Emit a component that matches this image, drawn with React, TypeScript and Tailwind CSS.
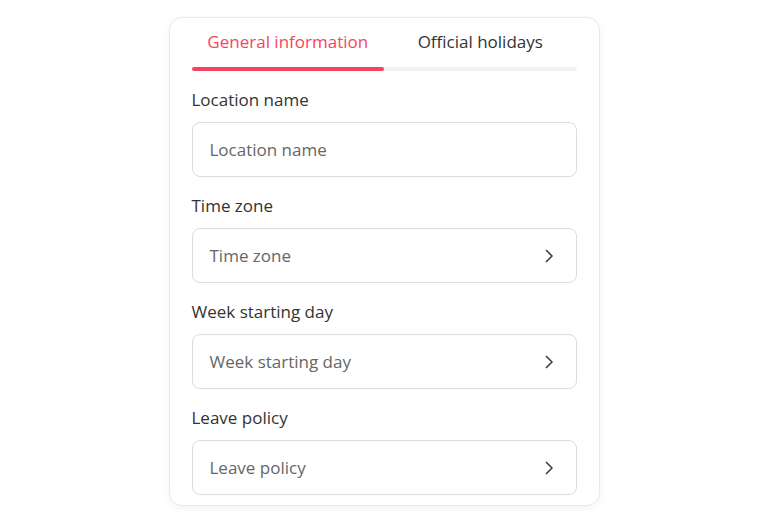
const fields = [
  { label: "Location name", chevron: false },
  { label: "Time zone", chevron: true },
  { label: "Week starting day", chevron: true },
  { label: "Leave policy", chevron: true },
];

const Chevron = () => (
  <svg width="10" height="16" viewBox="0 0 10 16" fill="none">
    <path
      d="M2.5 2.5 L8 8 L2.5 13.5"
      stroke="#444"
      strokeWidth="1.7"
      strokeLinecap="round"
      strokeLinejoin="round"
    />
  </svg>
);

const Field = ({ label, chevron }: { label: string; chevron: boolean }) => {
  return (
    <div className="flex flex-col">
      <div className="h-[28px] flex items-center text-[17px] text-[#333]">{label}</div>
      <div className="mt-[8px] h-[55px] rounded-[8px] border border-[#dcdcdc] flex items-center justify-between pl-[17px] pr-[22px]">
        <span className="text-[17px] text-[#666]">{label}</span>
        {chevron && <Chevron />}
      </div>
    </div>
  );
};

export default function App() {
  return (
    <div
      className="w-[768px] h-[522px] bg-white flex justify-center pt-[17px]"
      style={{ fontFamily: "'Open Sans', sans-serif" }}
    >
      <div className="w-[431px] h-[489px] rounded-[13px] border border-[#e9e9e9] shadow-[0_2px_8px_rgba(0,0,0,0.05)] px-[22px] flex flex-col">
        <div className="flex flex-col">
          <div className="flex h-[49px] items-end pb-[13px]">
            <div className="w-1/2 text-center text-[17px] text-[#f4455e]">General information</div>
            <div className="w-1/2 text-center text-[17px] text-[#333]">Official holidays</div>
          </div>
          <div className="h-[4px] rounded-full bg-[#f1f1f1] flex">
            <div className="w-1/2 h-full rounded-full bg-[#f4455e]" />
          </div>
        </div>
        <div className="flex flex-col gap-[15px] mt-[15px]">
          {fields.map((f, i) => (
            <Field key={i} label={f.label} chevron={f.chevron} />
          ))}
        </div>
      </div>
    </div>
  );
}
